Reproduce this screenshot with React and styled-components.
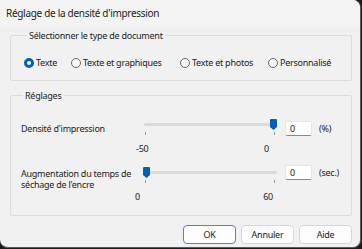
import React from 'react';
import styled, { createGlobalStyle } from "styled-components";

const GlobalStyle = createGlobalStyle`
  html, body {
    margin: 0;
    padding: 0;
    background: #1c1c1c;
  }
  body {
    font-family: "Noto Sans", "Open Sans", sans-serif;
    font-size: 9px;
    letter-spacing: -0.25px;
    color: #1b1b1b;
  }
`;

const Window = styled.div`
  width: 360px;
  height: 247px;
  background: #f1f1f1;
  border-radius: 0 8px 8px 8px;
  border-right: 1px solid #5a5a5a;
  border-bottom: 1px solid #5a5a5a;
  display: flex;
  flex-direction: column;
  overflow: hidden;
`;

const TitleBar = styled.div`
  height: 26px;
  flex-shrink: 0;
  display: flex;
  align-items: center;
  padding-left: 6px;
  font-size: 10px;
  letter-spacing: -0.3px;
  background: #f3f3f3;
`;

const Content = styled.div`
  display: flex;
  flex-direction: column;
  padding: 3px 8px 0 10px;
  gap: 8px;
`;

const Group = styled.fieldset`
  margin: 0;
  border: 1px solid #dcdcdc;
  border-radius: 2px;
  padding: ${p => p.$pad};
  height: ${p => p.$h};
  box-sizing: border-box;
`;

const Legend = styled.legend`
  padding: 0 2px;
  margin-left: 3px;
  font-size: 9px;
`;

const RadioRow = styled.div`
  display: flex;
  align-items: center;
`;

const RadioItem = styled.label`
  display: flex;
  align-items: center;
  gap: 2px;
  width: ${p => p.$w || 'auto'};
  white-space: nowrap;
`;

const RadioCircle = styled.span`
  width: 10px;
  height: 10px;
  border-radius: 50%;
  box-sizing: border-box;
  border: ${p => p.$on ? '3px solid #005fb8' : '1px solid #6a6a6a'};
  background: ${p => p.$on ? '#fff' : '#f7f7f7'};
  flex-shrink: 0;
`;

const SettingRow = styled.div`
  display: grid;
  grid-template-columns: 116px 135px 27px auto;
  column-gap: 7px;
  align-items: start;
  margin-bottom: ${p => p.$mb || '0'};
`;

const RowLabel = styled.div`
  line-height: 11px;
  padding-top: ${p => p.$pt};
  padding-left: 1px;
`;

const SliderBox = styled.div`
  display: flex;
  flex-direction: column;
`;

const TrackArea = styled.div`
  position: relative;
  height: 11px;
  display: flex;
  align-items: center;
`;

const Track = styled.div`
  height: 3px;
  flex: 1;
  background: #dadada;
  border-radius: 2px;
  margin: 0 1px;
`;

const Thumb = styled.svg`
  position: absolute;
  top: 0;
`;

const Ticks = styled.div`
  display: flex;
  justify-content: space-between;
  padding: 0 3px 0 2px;
  margin-top: 2px;
`;

const Tick = styled.span`
  width: 1px;
  height: 3px;
  background: #9a9a9a;
`;

const Scale = styled.div`
  display: flex;
  justify-content: space-between;
  margin: 7px ${p => p.$mr} 0 ${p => p.$ml};
`;

const ValueInput = styled.div`
  height: 15px;
  margin-top: ${p => p.$mt};
  box-sizing: border-box;
  background: #fff;
  border: 1px solid #e6e6e6;
  border-bottom: 1px solid #8a8a8a;
  border-radius: 2px;
  padding: 0 4px;
  display: flex;
  align-items: center;
`;

const Unit = styled.div`
  margin-top: ${p => p.$mt};
  line-height: 15px;
`;

const ButtonRow = styled.div`
  display: flex;
  justify-content: flex-end;
  gap: 5px;
  margin-top: 1px;
`;

const Button = styled.div`
  width: 53px;
  height: 19px;
  box-sizing: border-box;
  display: flex;
  align-items: center;
  justify-content: center;
  background: #fdfdfd;
  border: 1px solid ${p => p.$primary ? '#4a86cf' : '#d6d6d6'};
  border-radius: 4px;
`;

function Slider({ pos, left, right, ml, mr }) {
  return (
    <SliderBox>
      <TrackArea>
        <Track />
        <Thumb width="7" height="11" viewBox="0 0 7 11" style={{ left: pos }}>
          <path d="M1 0H6Q7 0 7 1V8L3.5 11L0 8V1Q0 0 1 0Z" fill="#005fb8" />
        </Thumb>
      </TrackArea>
      <Ticks><Tick /><Tick /></Ticks>
      <Scale $ml={ml} $mr={mr}><span>{left}</span><span>{right}</span></Scale>
    </SliderBox>
  );
}

const types = [
  { label: 'Texte', w: '47px', on: true },
  { label: 'Texte et graphiques', w: '109px' },
  { label: 'Texte et photos', w: '88px' },
  { label: 'Personnalisé' },
];

export default function App() {
  return (
    <>
      <GlobalStyle />
      <Window>
        <TitleBar>Réglage de la densité d'impression</TitleBar>
        <Content>
          <Group $pad="14px 0 0 13px" $h="52px">
            <Legend>Sélectionner le type de document</Legend>
            <RadioRow>
              {types.map(t => (
                <RadioItem key={t.label} $w={t.w}>
                  <RadioCircle $on={t.on} />
                  {t.label}
                </RadioItem>
              ))}
            </RadioRow>
          </Group>
          <Group $pad="17px 0 0 9px" $h="127px">
            <Legend>Réglages</Legend>
            <SettingRow $mb="12px">
              <RowLabel $pt="4px">Densité d'impression</RowLabel>
              <Slider pos="127px" left="-50" right="0" ml="-7px" mr="9px" />
              <ValueInput $mt="2px">0</ValueInput>
              <Unit $mt="2px">(%)</Unit>
            </SettingRow>
            <SettingRow>
              <RowLabel $pt="1px">Augmentation du temps de<br />séchage de l'encre</RowLabel>
              <Slider pos="0px" left="0" right="60" ml="-8px" mr="5px" />
              <ValueInput $mt="-2px">0</ValueInput>
              <Unit $mt="-2px">(sec.)</Unit>
            </SettingRow>
          </Group>
          <ButtonRow>
            <Button $primary>OK</Button>
            <Button>Annuler</Button>
            <Button>Aide</Button>
          </ButtonRow>
        </Content>
      </Window>
    </>
  );
}
